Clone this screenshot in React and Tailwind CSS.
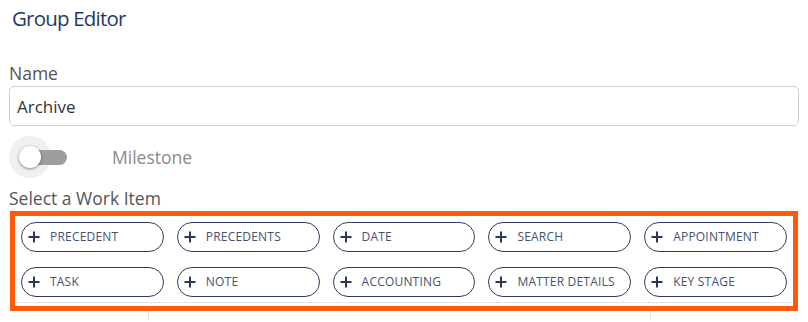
import { useState } from "react"

const items = [
  "Precedent",
  "Precedents",
  "Date",
  "Search",
  "Appointment",
  "Task",
  "Note",
  "Accounting",
  "Matter Details",
  "Key Stage",
]

function PlusIcon() {
  return (
    <svg width="12" height="12" viewBox="0 0 12 12" className="shrink-0">
      <path d="M6 0.5v11M0.5 6h11" stroke="#2a3858" strokeWidth="2" fill="none" />
    </svg>
  )
}

export default function App() {
  const [name, setName] = useState("Archive")
  const [milestone, setMilestone] = useState(false)

  return (
    <div className="w-[808px] h-[322px] overflow-hidden bg-white font-['Open_Sans',sans-serif]">
      <h1 className="pl-[12px] pt-[3px] text-[20.5px] leading-[30px] font-medium tracking-[-0.8px] text-[#1f3a64]">Group Editor</h1>

      <div className="px-[9px] mt-[30px]">
        <label className="block text-[17.5px] leading-[20px] text-[#555]">Name</label>
        <input
          value={name}
          onChange={(e) => setName(e.target.value)}
          className="mt-[3px] w-full h-[40px] rounded-[5px] border border-[#cfcfcf] px-[7px] text-[17px] text-[#333] outline-none"
        />

        <div className="flex items-center h-[48px] mt-[7px]">
          <button
            onClick={() => setMilestone(!milestone)}
            className="relative w-[44px] h-[40px] flex items-center"
          >
            <span className="absolute left-[0px] top-[0px] w-[42px] h-[42px] -mt-[1px] rounded-full bg-[#f0f0f0]" />
            <span className="absolute left-[12px] top-[13px] w-[46px] h-[15px] rounded-full bg-[#9e9e9e]" />
            <span className="absolute left-[10px] top-[9px] w-[22px] h-[22px] rounded-full bg-white shadow-[0_1px_3px_rgba(0,0,0,0.45)]" />
          </button>
          <span className="ml-[59px] text-[17.5px] text-[#8a8a8a]">Milestone</span>
        </div>

        <div className="mt-[7px] text-[17.5px] leading-[20px] text-[#555]">Select a Work Item</div>
      </div>

      <div className="relative mx-[10px] mt-[3px] h-[100px] border-[5px] border-[#ff5a0a]">
        <div className="grid grid-cols-5 gap-x-[13px] gap-y-[15px] px-[6px] pt-[6px]">
          {items.map((item) => (
            <button
              key={item}
              className="flex items-center h-[30px] rounded-full border-[1.5px] border-[#2d3b5c] pl-[6px] gap-[10px] text-[12px] uppercase tracking-[0.2px] text-[#44526f]"
            >
              <PlusIcon />
              <span>{item}</span>
            </button>
          ))}
        </div>
        <div className="absolute left-0 right-0 bottom-[3px] border-t border-[#e4e4e4]" />
      </div>
      <div className="flex h-[10px]">
        <div className="ml-[148px] border-l border-[#e4e4e4]" />
        <div className="ml-[501px] border-l border-[#e4e4e4]" />
      </div>
    </div>
  )
}
